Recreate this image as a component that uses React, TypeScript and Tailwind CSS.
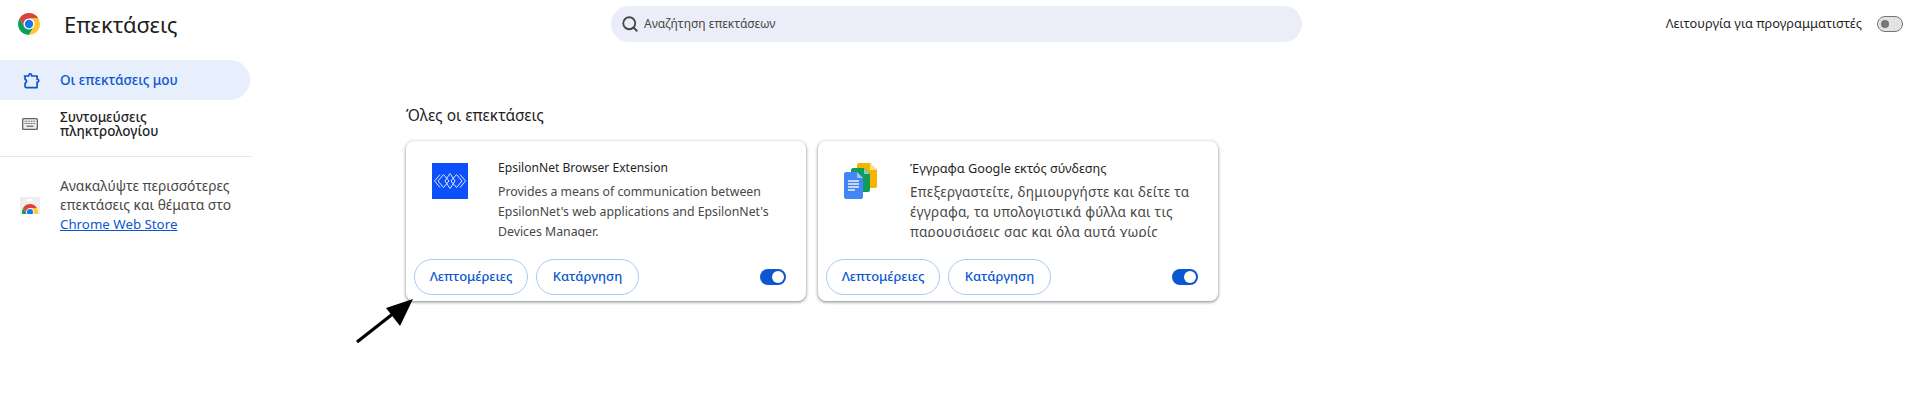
import { Search } from "lucide-react";

type ExtensionCardProps = {
  name: string;
  nameClass: string;
  description: string;
  descriptionClass: string;
  icon: React.ReactNode;
};

const ChromeLogo = ({ className }: { className: string }) => (
  <svg viewBox="0 0 100 100" className={className}>
    <circle cx="50" cy="50" r="50" fill="#fff" />
    <path d="M50 0A50 50 0 0 1 93.3 25L50 25A25 25 0 0 0 28.35 62.5L6.7 25A50 50 0 0 1 50 0Z" fill="#db4437" />
    <path d="M6.7 25A50 50 0 0 0 50 100L71.65 62.5A25 25 0 0 1 28.35 62.5Z" fill="#0f9d58" />
    <path d="M50 25L93.3 25A50 50 0 0 1 50 100L71.65 62.5A25 25 0 0 0 50 25Z" fill="#fcc934" />
    <circle cx="50" cy="50" r="19" fill="#1a73e8" />
  </svg>
);

const StoreIcon = () => (
  <div className="relative h-[17px] w-5 overflow-hidden bg-[#eeeeee]">
    <div className="mx-auto mt-[2px] h-[2px] w-[6px] bg-white" />
    <ChromeLogo className="absolute left-[2px] top-[7px] size-4" />
  </div>
);

const PuzzleIcon = () => (
  <svg viewBox="0 0 16 17" className="size-[17px]" fill="none" stroke="#0b57d0" strokeWidth="1.7" strokeLinejoin="round">
    <path d="M1 4H5.2C5 1.2 8.4 1.2 8.2 4H13.6V7.2C15.8 7.4 15.8 10 13.6 10.2V15.6H3C2 15.6 1.6 15 1.6 14.4V11C3.6 10.6 3.6 8 1.6 7.6V4Z" />
  </svg>
);

const KeyboardIcon = () => (
  <svg viewBox="0 0 16 12" className="h-3 w-4">
    <rect x="0" y="0" width="16" height="12" rx="1.6" fill="#5f6368" />
    <rect x="1.3" y="1.3" width="13.4" height="9.4" rx="0.6" fill="#eceef0" />
    <path d="M2.5 3.2H13.5M2.5 5.5H13.5" stroke="#5f6368" strokeWidth="1.1" strokeDasharray="1 0.6" />
    <path d="M4.5 8.2H11.5" stroke="#5f6368" strokeWidth="1.2" />
  </svg>
);

const EpsilonIcon = () => (
  <div className="flex size-9 items-center justify-center bg-[#0b50fb]">
    <svg viewBox="0 0 36 36" className="size-9" fill="none" stroke="#dfe8ff" strokeWidth="1">
      <path d="M8 11.5L2.5 18L8 24.5" />
      <path d="M11.5 11.5L6 18L11.5 24.5L17 18Z" />
      <path d="M18 10.5L13 18L18 25.5L23 18Z" />
      <path d="M24.5 11.5L19 18L24.5 24.5L30 18Z" />
      <path d="M28 11.5L33.5 18L28 24.5" />
    </svg>
  </div>
);

const DocsIcon = () => (
  <svg viewBox="0 0 36 36" className="size-9">
    <path d="M15 0H26L33 7V23C33 24 32 25 31 25H15C14 25 13 24 13 23V2C13 1 14 0 15 0Z" fill="#f4b400" />
    <path d="M26 0L33 7H26Z" fill="#fadf8f" />
    <path d="M9 5H20L26 11V27C26 28 25 29 24 29H9C8 29 7 28 7 27V7C7 6 8 5 9 5Z" fill="#0f9d58" />
    <path d="M20 5L26 11H20Z" fill="#87ceac" />
    <path d="M2 9H13L19 15V34C19 35 18 36 17 36H2C1 36 0 35 0 34V11C0 10 1 9 2 9Z" fill="#4285f4" />
    <path d="M13 9L19 15H13Z" fill="#a1c2fa" />
    <path d="M4 18H15M4 21H15M4 24H15M4 27H11" stroke="#f1f1f1" strokeWidth="1.4" />
  </svg>
);

const ExtensionCard = ({ name, nameClass, description, descriptionClass, icon }: ExtensionCardProps) => (
  <div className="flex h-40 w-[400px] flex-col rounded-lg bg-white shadow-[0_1px_3px_1px_rgba(60,64,67,0.15),0_1px_3px_rgba(60,64,67,0.5)]">
    <div className="flex h-[118px] pl-[26px] pr-4 pt-[22px]">
      <div className="w-[66px] shrink-0">{icon}</div>
      <div className="min-w-0">
        <div className={`-mt-[5px] leading-[20px] text-[#1f1f1f] ${nameClass}`}>{name}</div>
        <div className={`mt-[4px] h-[55px] overflow-hidden leading-[20px] text-[#474747] ${descriptionClass}`}>{description}</div>
      </div>
    </div>
    <div className="flex items-center gap-2 pl-2 pr-5">
      <button className="h-9 w-[114px] rounded-full border border-[#a8c7fa] text-[13px] font-medium text-[#0b57d0]">Λεπτομέρειες</button>
      <button className="h-9 w-[103px] rounded-full border border-[#a8c7fa] text-[13px] font-medium text-[#0b57d0]">Κατάργηση</button>
      <div className="ml-auto flex h-4 w-[26px] items-center justify-end rounded-full bg-[#0b57d0] pr-[2px]">
        <div className="size-3 rounded-full bg-white" />
      </div>
    </div>
  </div>
);

export default function App() {
  return (
    <div className="relative h-[406px] w-full overflow-hidden bg-white font-['Noto_Sans',sans-serif]">
      <header className="flex h-12 items-center">
        <div className="flex w-[611px] items-center pl-[18px]">
          <ChromeLogo className="size-[22px]" />
          <h1 className="ml-6 text-[22px] font-normal leading-none text-[#1f1f1f]">Επεκτάσεις</h1>
        </div>
        <div className="flex h-9 w-[691px] items-center rounded-full bg-[#ebeef8] pl-[10px]">
          <Search className="size-[18px] text-[#474747]" strokeWidth={2.4} />
          <span className="ml-[5px] text-[12px] text-[#474747]">Αναζήτηση επεκτάσεων</span>
        </div>
        <div className="ml-auto flex items-center pr-3">
          <span className="text-[12.8px] text-[#1f1f1f]">Λειτουργία για προγραμματιστές</span>
          <div className="ml-[15px] flex h-4 w-[26px] items-center rounded-full border border-[#747775] bg-[#e3e3e3] pl-[3px]">
            <div className="size-2 rounded-full bg-[#747775]" />
          </div>
        </div>
      </header>
      <div className="flex">
        <aside className="w-[252px] shrink-0 pt-3">
          <div className="flex h-10 w-[250px] items-center rounded-r-[20px] bg-[#e7eefc] pl-[23px]">
            <PuzzleIcon />
            <span className="ml-5 text-[13.5px] font-medium text-[#0b57d0]">Οι επεκτάσεις μου</span>
          </div>
          <div className="flex h-[57px] items-start border-b border-[#e8e8e8] pl-[22px] pt-[10px]">
            <div className="mt-[8px]">
              <KeyboardIcon />
            </div>
            <span className="ml-[22px] text-[13.5px] font-medium leading-[14px] text-[#1f1f1f]">
              Συντομεύσεις
              <br />
              πληκτρολογίου
            </span>
          </div>
          <div className="flex items-center pl-5 pt-[19px]">
            <StoreIcon />
            <p className="ml-5 text-[13.8px] leading-[19px] text-[#474747]">
              Ανακαλύψτε περισσότερες
              <br />
              επεκτάσεις και θέματα στο
              <br />
              <a className="text-[13.3px] text-[#0b57d0] underline">Chrome Web Store</a>
            </p>
          </div>
        </aside>
        <main className="pl-[154px] pt-[57px]">
          <h2 className="text-[15.5px] leading-5 text-[#1f1f1f]">Όλες οι επεκτάσεις</h2>
          <div className="mt-4 flex gap-3">
            <ExtensionCard
              name="EpsilonNet Browser Extension"
              nameClass="text-[12.1px]"
              description="Provides a means of communication between EpsilonNet's web applications and EpsilonNet's Devices Manager."
              descriptionClass="text-[12.3px]"
              icon={<EpsilonIcon />}
            />
            <ExtensionCard
              name="Έγγραφα Google εκτός σύνδεσης"
              nameClass="text-[12.7px]"
              description="Επεξεργαστείτε, δημιουργήστε και δείτε τα έγγραφα, τα υπολογιστικά φύλλα και τις παρουσιάσεις σας και όλα αυτά χωρίς σύνδεση."
              descriptionClass="text-[13.5px] tracking-[0.25px]"
              icon={<DocsIcon />}
            />
          </div>
        </main>
      </div>
      <svg viewBox="0 0 60 46" className="absolute left-[355px] top-[298px] h-[46px] w-[60px]">
        <path d="M2 44L44 11" stroke="#000" strokeWidth="3.2" />
        <path d="M58 1L45 28L31 10Z" fill="#000" />
      </svg>
    </div>
  );
}
